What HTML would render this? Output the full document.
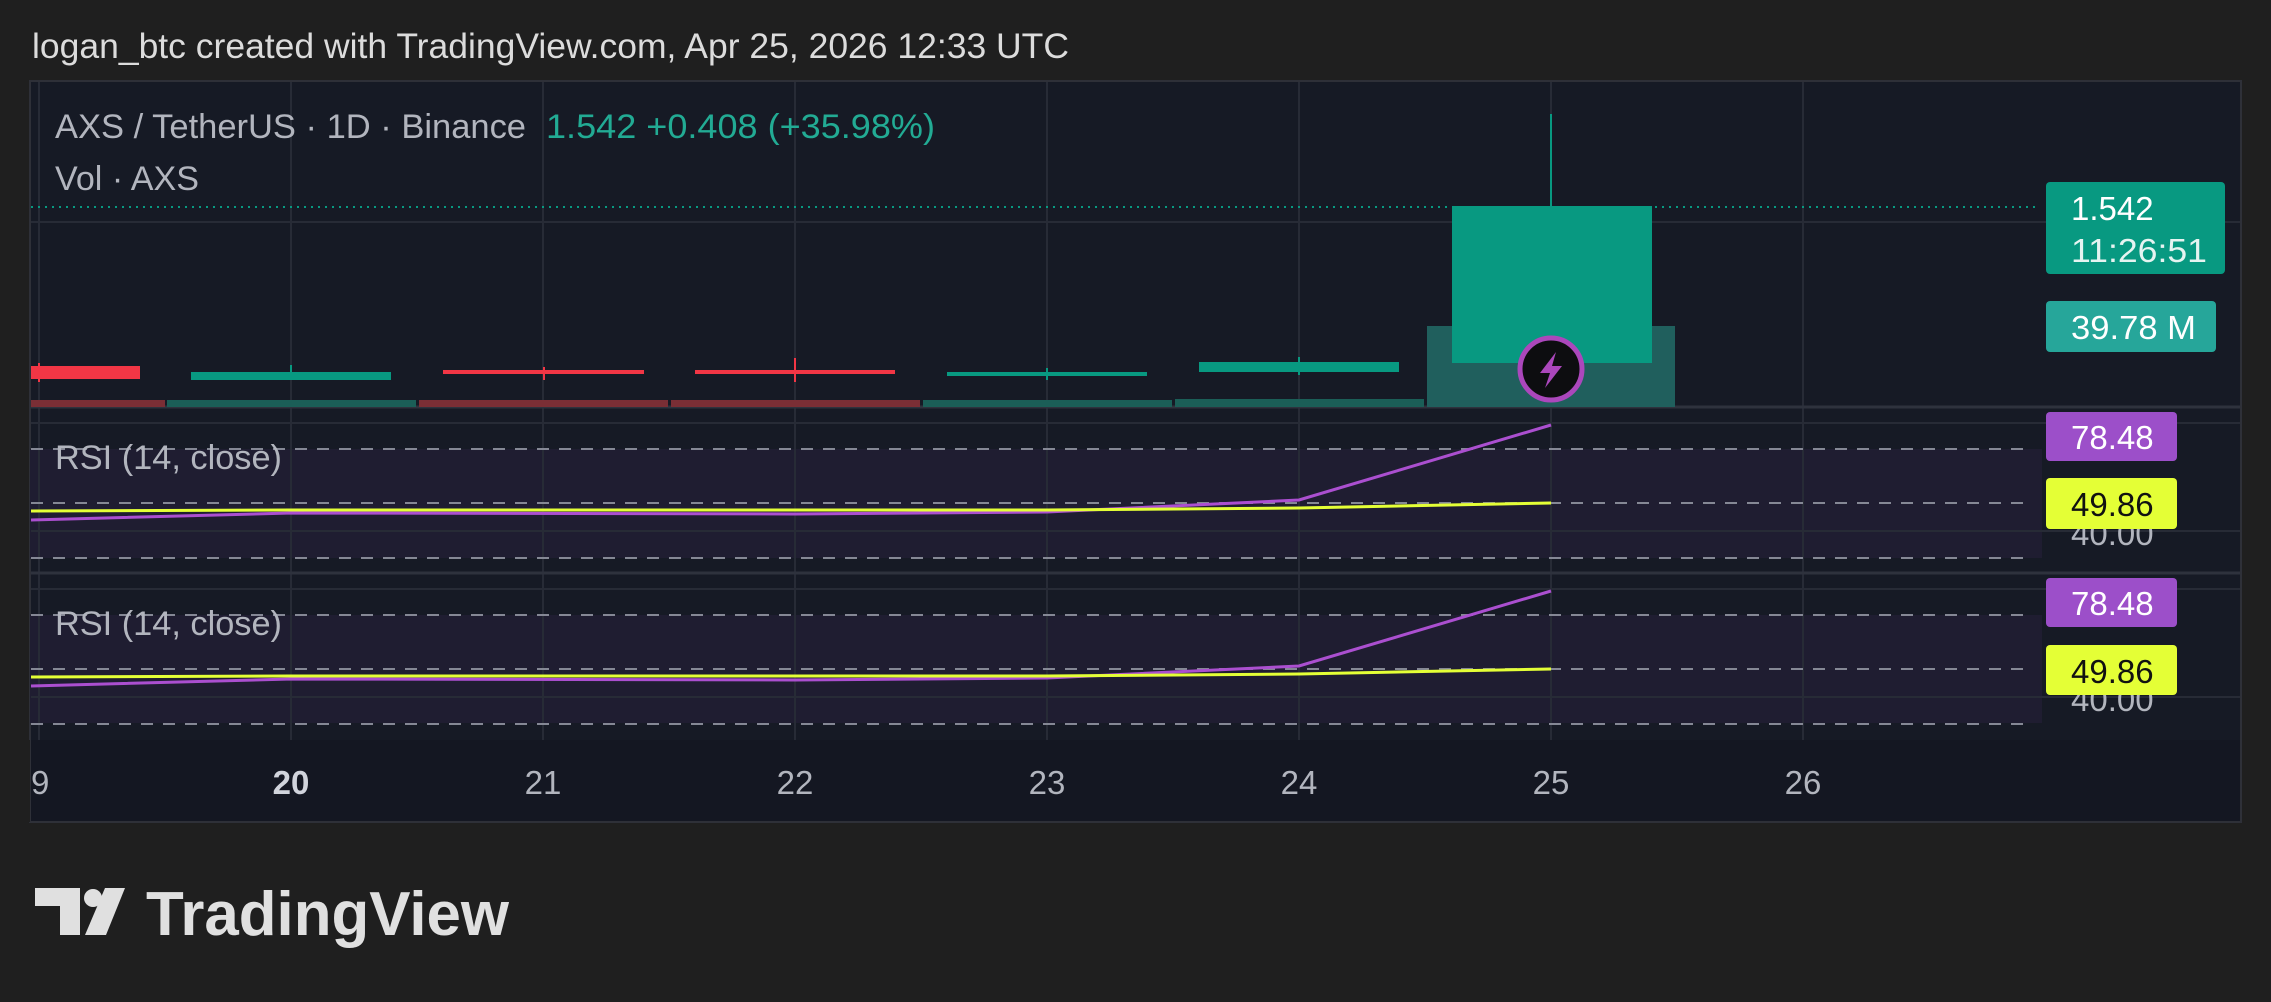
<!DOCTYPE html>
<html><head><meta charset="utf-8"><style>
html,body{margin:0;padding:0;background:#1f1f1f;width:2271px;height:1002px;overflow:hidden}
svg{display:block}
text{font-family:"Liberation Sans",sans-serif}
</style></head><body>
<svg width="2271" height="1002" viewBox="0 0 2271 1002" xmlns="http://www.w3.org/2000/svg">
<rect width="2271" height="1002" fill="#1f1f1f"/>
<text x="32" y="58" font-size="35" fill="#dcdcdc" textLength="1037" lengthAdjust="spacingAndGlyphs">logan_btc created with TradingView.com, Apr 25, 2026 12:33 UTC</text>
<rect x="30" y="81" width="2211" height="741" fill="#161a25" stroke="#2e3038" stroke-width="2"/>
<rect x="30" y="449" width="2012" height="109" fill="#1f1d31"/>
<rect x="30" y="615" width="2012" height="108" fill="#1f1d31"/>
<rect x="31" y="740" width="2209" height="81" fill="#141722"/>
<g stroke="#272b36" stroke-width="2">
<line x1="39" y1="82" x2="39" y2="740"/><line x1="291" y1="82" x2="291" y2="740"/>
<line x1="543" y1="82" x2="543" y2="740"/><line x1="795" y1="82" x2="795" y2="740"/>
<line x1="1047" y1="82" x2="1047" y2="740"/><line x1="1299" y1="82" x2="1299" y2="740"/>
<line x1="1551" y1="82" x2="1551" y2="740"/><line x1="1803" y1="82" x2="1803" y2="740"/>
<line x1="31" y1="222" x2="2240" y2="222"/>
<line x1="31" y1="423" x2="2240" y2="423"/><line x1="31" y1="531" x2="2240" y2="531"/>
<line x1="31" y1="589" x2="2240" y2="589"/><line x1="31" y1="697" x2="2240" y2="697"/>
</g>
<line x1="31" y1="407" x2="2240" y2="407" stroke="#2e323d" stroke-width="3"/>
<line x1="31" y1="573" x2="2240" y2="573" stroke="#2e323d" stroke-width="3"/>
<line x1="31" y1="207" x2="2040" y2="207" stroke="#089981" stroke-width="2" stroke-dasharray="2 5"/>
<rect x="31" y="400" width="134" height="7" fill="#7a2e35"/>
<rect x="167" y="400" width="249" height="7" fill="#1b5e57"/>
<rect x="419" y="400" width="249" height="7" fill="#7a2e35"/>
<rect x="671" y="400" width="249" height="7" fill="#7a2e35"/>
<rect x="923" y="400" width="249" height="7" fill="#1b5e57"/>
<rect x="1175" y="399" width="249" height="8" fill="#1b5e57"/>
<rect x="1427" y="326" width="248" height="81" fill="#205f5d"/>
<rect x="31" y="366" width="109" height="13" fill="#f23645"/>
<line x1="39" y1="363" x2="39" y2="382" stroke="#f23645" stroke-width="2"/>
<rect x="191" y="372" width="200" height="8" fill="#089981"/><line x1="291" y1="365" x2="291" y2="380" stroke="#089981" stroke-width="2"/>
<rect x="443" y="370" width="201" height="4" fill="#f23645"/><line x1="544" y1="367" x2="544" y2="380" stroke="#f23645" stroke-width="2"/>
<rect x="695" y="370" width="200" height="4" fill="#f23645"/><line x1="795" y1="358" x2="795" y2="382" stroke="#f23645" stroke-width="2"/>
<rect x="947" y="372" width="200" height="4" fill="#089981"/><line x1="1047" y1="368" x2="1047" y2="380" stroke="#089981" stroke-width="2"/>
<rect x="1199" y="362" width="200" height="10" fill="#089981"/><line x1="1299" y1="357" x2="1299" y2="375" stroke="#089981" stroke-width="2"/>
<line x1="1551" y1="114" x2="1551" y2="206" stroke="#089981" stroke-width="2"/>
<rect x="1452" y="206" width="200" height="157" fill="#089981"/>
<circle cx="1551" cy="369" r="31" fill="#0d0d10" stroke="#ab47bc" stroke-width="5"/>
<path d="M1556 352 L1540 373 H1550 L1545 388 L1562 366 H1552 Z" fill="#ab47bc"/>
<text x="55" y="138" font-size="34" fill="#b2b5be" textLength="471" lengthAdjust="spacingAndGlyphs">AXS / TetherUS · 1D · Binance</text>
<text x="546" y="138" font-size="34" fill="#22ab94" textLength="389" lengthAdjust="spacingAndGlyphs">1.542  +0.408 (+35.98%)</text>
<text x="55" y="190" font-size="34" fill="#b2b5be" textLength="144" lengthAdjust="spacingAndGlyphs">Vol · AXS</text>
<rect x="2046" y="182" width="179" height="92" rx="4" fill="#089981"/>
<text x="2071" y="220" font-size="33" fill="#fff">1.542</text>
<text x="2071" y="262" font-size="33" fill="#e6f4f1" textLength="136" lengthAdjust="spacingAndGlyphs">11:26:51</text>
<rect x="2046" y="301" width="170" height="51" rx="4" fill="#26a69a"/>
<text x="2071" y="339" font-size="33" fill="#fff" textLength="125" lengthAdjust="spacingAndGlyphs">39.78 M</text>
<g stroke="#858895" stroke-width="2" stroke-dasharray="12 10">
<line x1="31" y1="449" x2="2030" y2="449"/><line x1="31" y1="503" x2="2030" y2="503"/><line x1="31" y1="558" x2="2030" y2="558"/>
<line x1="31" y1="615" x2="2030" y2="615"/><line x1="31" y1="669" x2="2030" y2="669"/><line x1="31" y1="724" x2="2030" y2="724"/>
</g>
<g fill="none" stroke-width="3">
<polyline points="31,520 291,513 795,514 1047,512 1299,500 1551,425" stroke="#ab4fd0"/>
<polyline points="31,511 291,510 1047,510 1299,508 1551,503" stroke="#e4ff36"/>
<polyline points="31,686 291,679 795,680 1047,678 1299,666 1551,591" stroke="#ab4fd0"/>
<polyline points="31,677 291,676 1047,676 1299,674 1551,669" stroke="#e4ff36"/>
</g>
<text x="55" y="469" font-size="34" fill="#b2b5be" textLength="227" lengthAdjust="spacingAndGlyphs">RSI (14, close)</text>
<text x="55" y="635" font-size="34" fill="#b2b5be" textLength="227" lengthAdjust="spacingAndGlyphs">RSI (14, close)</text>
<text x="2071" y="545" font-size="33" fill="#b2b5be">40.00</text>
<text x="2071" y="711" font-size="33" fill="#b2b5be">40.00</text>
<rect x="2046" y="412" width="131" height="49" rx="4" fill="#9c4fc9"/>
<text x="2071" y="449" font-size="33" fill="#fff">78.48</text>
<rect x="2046" y="478" width="131" height="51" rx="4" fill="#e4ff36"/>
<text x="2071" y="516" font-size="33" fill="#111">49.86</text>
<rect x="2046" y="578" width="131" height="49" rx="4" fill="#9c4fc9"/>
<text x="2071" y="615" font-size="33" fill="#fff">78.48</text>
<rect x="2046" y="645" width="131" height="50" rx="4" fill="#e4ff36"/>
<text x="2071" y="683" font-size="33" fill="#111">49.86</text>
<g font-size="33" fill="#b2b5be" text-anchor="middle">
<text x="31" y="794">19</text>
<text x="291" y="794" fill="#d1d4dc" font-weight="bold">20</text>
<text x="543" y="794">21</text><text x="795" y="794">22</text><text x="1047" y="794">23</text>
<text x="1299" y="794">24</text><text x="1551" y="794">25</text><text x="1803" y="794">26</text>
</g>
<rect x="0" y="740" width="30" height="82" fill="#1f1f1f"/>
<g fill="#e0e0e0">
<path d="M35 888 H80 V935 H60 V906 H35 Z"/>
<circle cx="93" cy="898" r="9"/>
<path d="M105 888 H125 L106 935 H85 Z"/>
</g>
<text x="146" y="935" font-size="62" font-weight="bold" fill="#e0e0e0" textLength="363" lengthAdjust="spacingAndGlyphs">TradingView</text>
</svg>
</body></html>
